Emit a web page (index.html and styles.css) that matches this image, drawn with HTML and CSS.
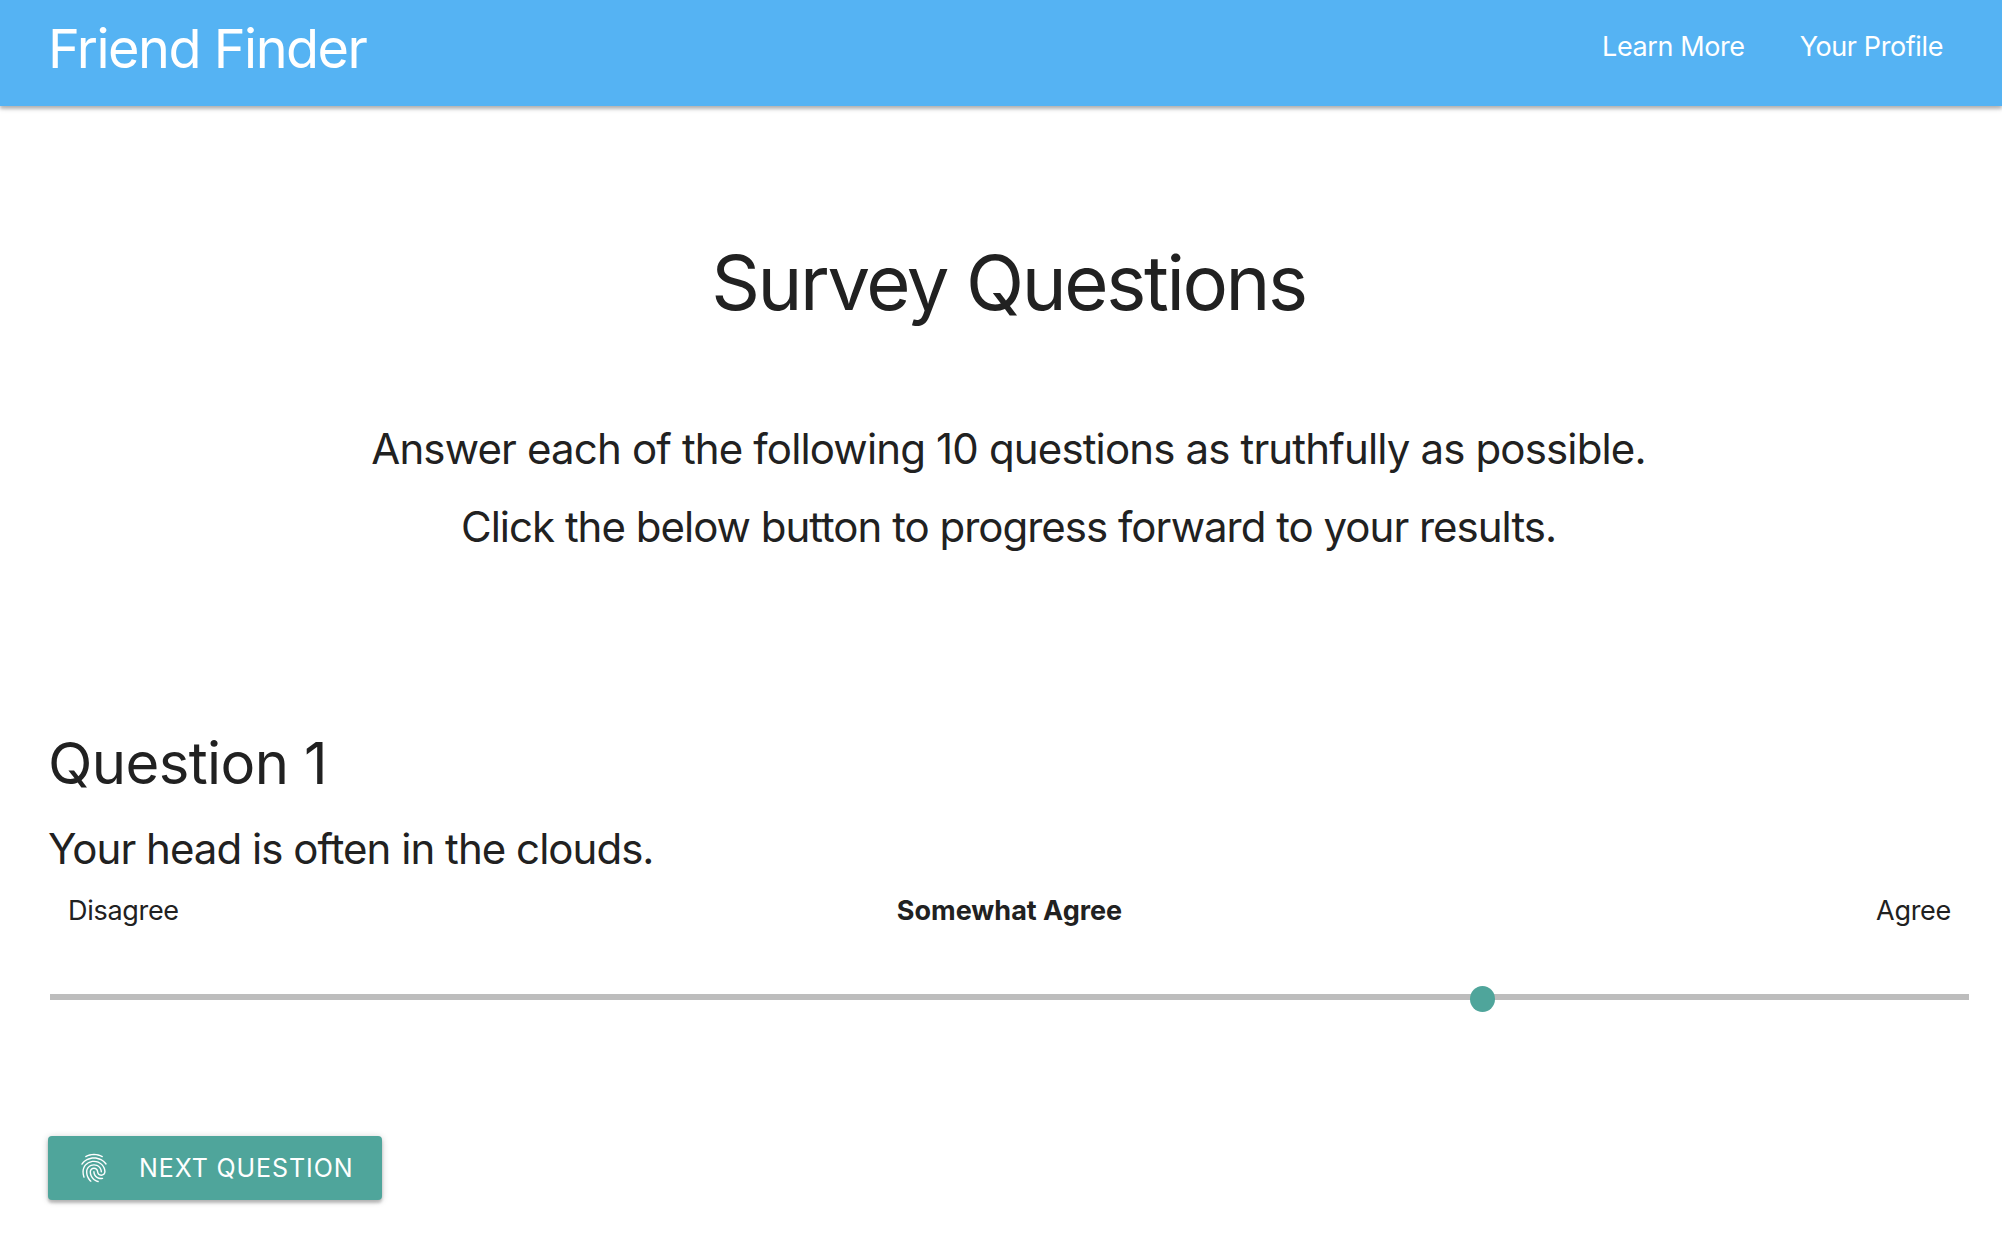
FILE: index.html
```html
<!DOCTYPE html>
<html lang="en">
<head>
    <meta charset="UTF-8">
    <meta name="viewport" content="width=device-width, initial-scale=1.0">
    <title>Friend Finder</title>
    <link rel="stylesheet" href="styles.css">
</head>
<body>

<nav class="navbar">
    <a class="brand" href="#">Friend Finder</a>
    <ul class="nav-links">
        <li><a href="#">Learn More</a></li>
        <li><a href="#">Your Profile</a></li>
    </ul>
</nav>

<main class="content">
    <h1 class="page-title">Survey Questions</h1>
    <p class="intro">Answer each of the following 10 questions as truthfully as possible.</p>
    <p class="intro">Click the below button to progress forward to your results.</p>

    <section class="question">
        <h2 class="question-title">Question 1</h2>
        <p class="question-text">Your head is often in the clouds.</p>
        <div class="scale-labels">
            <span>Disagree</span>
            <span class="scale-current">Somewhat Agree</span>
            <span class="scale-end">Agree</span>
        </div>
        <div class="slider">
            <div class="slider-track"></div>
            <div class="slider-thumb"></div>
        </div>
    </section>

    <button class="next-btn" type="button">
        <svg class="next-icon" viewBox="0 0 24 24" fill="currentColor">
            <path d="M17.81 4.47c-.08 0-.16-.02-.23-.06C15.66 3.42 14 3 12.01 3c-1.98 0-3.86.47-5.57 1.41-.24.13-.54.04-.68-.2-.13-.24-.04-.55.2-.68C7.82 2.52 9.86 2 12.01 2c2.13 0 3.99.47 6.03 1.52.25.13.34.43.21.67-.09.18-.26.28-.44.28zM3.5 9.72c-.1 0-.2-.03-.29-.09-.23-.16-.28-.47-.12-.7.99-1.4 2.25-2.5 3.75-3.27C9.98 4.04 14 4.03 17.15 5.65c1.5.77 2.76 1.86 3.75 3.25.16.22.11.54-.12.7-.23.16-.54.11-.7-.12-.9-1.26-2.04-2.25-3.39-2.94-2.87-1.47-6.54-1.47-9.4.01-1.36.7-2.5 1.7-3.4 2.96-.08.14-.23.21-.39.21zm6.25 12.07c-.13 0-.26-.05-.35-.15-.87-.87-1.34-1.43-2.01-2.64-.69-1.23-1.05-2.73-1.05-4.34 0-2.97 2.54-5.39 5.66-5.39s5.66 2.42 5.66 5.39c0 .28-.22.5-.5.5s-.5-.22-.5-.5c0-2.42-2.09-4.39-4.66-4.39-2.57 0-4.66 1.97-4.66 4.39 0 1.44.32 2.77.93 3.85.64 1.15 1.08 1.64 1.85 2.42.19.2.19.51 0 .71-.11.1-.24.15-.37.15zm7.17-1.85c-1.19 0-2.24-.3-3.1-.89-1.49-1.01-2.38-2.65-2.38-4.39 0-.28.22-.5.5-.5s.5.22.5.5c0 1.41.72 2.74 1.94 3.56.71.48 1.54.71 2.54.71.24 0 .64-.03 1.04-.1.27-.05.53.13.58.41.05.27-.13.53-.41.58-.57.11-1.07.12-1.21.12zM14.91 22c-.04 0-.09-.01-.13-.02-1.59-.44-2.63-1.03-3.72-2.1-1.4-1.39-2.17-3.24-2.17-5.22 0-1.62 1.38-2.94 3.08-2.94 1.7 0 3.08 1.32 3.08 2.94 0 1.07.93 1.94 2.08 1.94s2.08-.87 2.08-1.94c0-3.77-3.25-6.83-7.25-6.83-2.84 0-5.44 1.58-6.61 4.03-.39.81-.59 1.76-.59 2.8 0 .78.07 2.01.67 3.61.1.26-.03.55-.29.64-.26.1-.55-.04-.64-.29-.49-1.31-.73-2.61-.73-3.96 0-1.2.23-2.29.68-3.24 1.33-2.79 4.28-4.6 7.51-4.6 4.55 0 8.25 3.51 8.25 7.83 0 1.62-1.38 2.94-3.08 2.94s-3.08-1.32-3.08-2.94c0-1.07-.93-1.94-2.08-1.94s-2.08.87-2.08 1.94c0 1.71.66 3.31 1.87 4.51.95.94 1.86 1.46 3.27 1.85.27.07.42.35.35.61-.05.23-.26.38-.47.38z"/>
        </svg>
        <span>Next Question</span>
    </button>
</main>

</body>
</html>
```

FILE: styles.css
```css
* {
    box-sizing: border-box;
}
body {
    margin: 0;
    height: 1252px;
    overflow: hidden;
    background-color: #fff;
    color: #212121;
    font-family: Inter, "Liberation Sans", sans-serif;
}
.navbar {
    display: flex;
    justify-content: space-between;
    align-items: center;
    height: 106px;
    padding: 0 59px 10px 48px;
    background-color: #55b3f3;
    box-shadow: 0 3px 3px rgba(0, 0, 0, 0.2), 0 1px 7px rgba(0, 0, 0, 0.2);
}
.navbar a {
    color: #fff;
    text-decoration: none;
}
.brand {
    font-size: 54px;
    letter-spacing: -1.5px;
}
.nav-links {
    display: flex;
    gap: 55px;
    margin: 0 0 3px;
    padding: 0;
    list-style: none;
    font-size: 27px;
    letter-spacing: -0.4px;
}
.content {
    padding: 126px 33px 0 48px;
}
.page-title {
    margin: 0 0 78px;
    text-align: center;
    font-size: 76px;
    line-height: 100px;
    font-weight: 400;
    letter-spacing: -2.4px;
}
.intro {
    margin: 0;
    text-align: center;
    font-size: 42px;
    line-height: 78px;
    letter-spacing: -0.85px;
}
.intro + .intro {
    letter-spacing: -1px;
}
.question {
    margin-top: 159px;
}
.question-title {
    margin: 0;
    font-size: 58px;
    line-height: 76px;
    font-weight: 400;
    letter-spacing: -0.6px;
}
.question-text {
    margin: 16px 0 0;
    font-size: 42px;
    line-height: 64px;
    letter-spacing: -0.97px;
}
.scale-labels {
    display: grid;
    grid-template-columns: 1fr auto 1fr;
    margin-top: 6px;
    padding: 0 18px 0 20px;
    font-size: 27px;
    line-height: 48px;
    letter-spacing: -0.3px;
}
.scale-current {
    font-weight: 700;
    letter-spacing: 0;
}
.scale-end {
    text-align: right;
}
.slider {
    position: relative;
    height: 30px;
    margin: 51px 0 0 2px;
    padding-top: 8px;
}
.slider-track {
    height: 6px;
    background-color: #bdbdbd;
}
.slider-thumb {
    position: absolute;
    top: 0;
    left: 1420px;
    width: 25px;
    height: 26px;
    border-radius: 50%;
    background-color: #4fa59b;
}
.next-btn {
    display: flex;
    align-items: center;
    width: 334px;
    height: 64px;
    margin-top: 120px;
    padding: 0 0 0 29px;
    border: none;
    border-radius: 4px;
    background-color: #4fa59b;
    color: #fff;
    font-family: inherit;
    font-size: 25px;
    letter-spacing: 0.9px;
    text-transform: uppercase;
    box-shadow: 0 3px 3px rgba(0, 0, 0, 0.2), 0 1px 7px rgba(0, 0, 0, 0.2);
    cursor: pointer;
}
.next-icon {
    width: 34px;
    height: 34px;
    margin-right: 28px;
}
```
